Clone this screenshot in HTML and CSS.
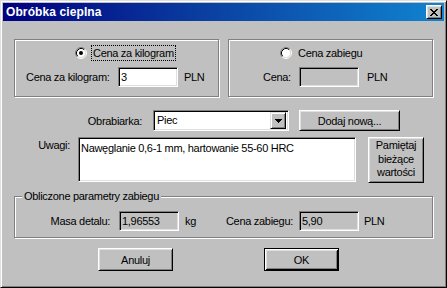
FILE: index.html
```html
<!DOCTYPE html>
<html lang="pl">
<head>
<meta charset="utf-8">
<title>Obróbka cieplna</title>
<link rel="stylesheet" href="styles.css">
</head>
<body>
<div class="window">
  <div class="titlebar">
    <span class="title">Obróbka cieplna</span>
    <span class="close-btn">
      <svg width="8" height="7" viewBox="0 0 8 7" shape-rendering="crispEdges"><path d="M0 0h2v1H0zM6 0h2v1H6zM1 1h2v1H1zM5 1h2v1H5zM2 2h4v1H2zM3 3h2v1H3zM2 4h4v1H2zM1 5h2v1H1zM5 5h2v1H5zM0 6h2v1H0zM6 6h2v1H6z" fill="#000"/></svg>
    </span>
  </div>
  <div class="client">
    <div class="groups">
      <div class="group g-top g1">
        <div class="radio-row rr1">
          <svg class="radio" width="12" height="12" viewBox="0 0 12 12"><circle cx="6" cy="6" r="4.5" fill="#fff"/><path d="M2.11 9.89A5.5 5.5 0 0 1 9.89 2.11" fill="none" stroke="#808080"/><path d="M9.89 2.11A5.5 5.5 0 0 1 2.11 9.89" fill="none" stroke="#fff"/><path d="M2.82 9.18A4.5 4.5 0 0 1 9.18 2.82" fill="none" stroke="#000"/><path d="M9.18 2.82A4.5 4.5 0 0 1 2.82 9.18" fill="none" stroke="#dfdfdf"/><circle cx="6" cy="6" r="2" fill="#000"/></svg>
          <span class="radio-label focused">Cena za kilogram</span>
        </div>
        <div class="field-row fr1">
          <span class="lbl lbl-kg">Cena za kilogram:</span>
          <span class="edit edit-w">3</span>
          <span class="unit u1">PLN</span>
        </div>
      </div>
      <div class="group g-top g2">
        <div class="radio-row rr2">
          <svg class="radio" width="12" height="12" viewBox="0 0 12 12"><circle cx="6" cy="6" r="4.5" fill="#fff"/><path d="M2.11 9.89A5.5 5.5 0 0 1 9.89 2.11" fill="none" stroke="#808080"/><path d="M9.89 2.11A5.5 5.5 0 0 1 2.11 9.89" fill="none" stroke="#fff"/><path d="M2.82 9.18A4.5 4.5 0 0 1 9.18 2.82" fill="none" stroke="#000"/><path d="M9.18 2.82A4.5 4.5 0 0 1 2.82 9.18" fill="none" stroke="#dfdfdf"/></svg>
          <span class="radio-label">Cena zabiegu</span>
        </div>
        <div class="field-row fr2">
          <span class="lbl lbl-cena">Cena:</span>
          <span class="edit edit-g"></span>
          <span class="unit u2">PLN</span>
        </div>
      </div>
    </div>

    <div class="machine-row">
      <span class="lbl lbl-machine">Obrabiarka:</span>
      <div class="combo">
        <span class="combo-text">Piec</span>
        <span class="combo-btn">
          <svg width="7" height="4" viewBox="0 0 7 4" shape-rendering="crispEdges"><path d="M0 0h7v1H0zM1 1h5v1H1zM2 2h3v1H2zM3 3h1v1H3z" fill="#000"/></svg>
        </span>
      </div>
      <span class="btn btn-add">Dodaj nową...</span>
    </div>

    <div class="notes-row">
      <span class="lbl lbl-notes">Uwagi:</span>
      <div class="memo">Nawęglanie 0,6-1 mm, hartowanie 55-60 HRC</div>
      <span class="btn btn-remember">Pamiętaj<br>bieżące<br>wartości</span>
    </div>

    <div class="group g3">
      <span class="legend">Obliczone parametry zabiegu</span>
      <div class="calc-row">
        <span class="lbl lbl-mass">Masa detalu:</span>
        <span class="edit edit-g edit-ro">1,96553</span>
        <span class="unit u-kgunit">kg</span>
        <span class="lbl lbl-price">Cena zabiegu:</span>
        <span class="edit edit-g edit-ro">5,90</span>
        <span class="unit u3">PLN</span>
      </div>
    </div>

    <div class="buttons">
      <span class="btn btn-cancel">Anuluj</span>
      <span class="btn btn-default btn-ok">OK</span>
    </div>
  </div>
</div>
</body>
</html>
```

FILE: styles.css
```css
* { box-sizing: border-box; }
html, body { margin: 0; padding: 0; }
body {
  width: 447px;
  height: 288px;
  overflow: hidden;
  background: #c0c0c0;
  font-family: "Liberation Sans", Arial, sans-serif;
  font-size: 11px;
  letter-spacing: -0.3px;
  color: #000;
}

.window {
  width: 447px;
  height: 288px;
  border: 1px solid;
  border-color: #dfdfdf #000 #000 #dfdfdf;
  box-shadow: inset 1px 1px #fff, inset -1px -1px #808080;
  padding: 2px;
  background: #c0c0c0;
  display: flex;
  flex-direction: column;
}

.titlebar {
  height: 18px;
  flex: none;
  background: linear-gradient(90deg, #000080 0%, #0a3ea0 45%, #1084d0 100%);
  display: flex;
  align-items: center;
  justify-content: space-between;
  padding: 0 2px 0 3px;
}
.title {
  color: #fff;
  font-weight: bold;
  font-size: 12px;
  letter-spacing: 0.1px;
  line-height: 14px;
}
.close-btn {
  width: 16px;
  height: 14px;
  background: #c0c0c0;
  border: 1px solid;
  border-color: #fff #000 #000 #fff;
  box-shadow: inset 1px 1px #dfdfdf, inset -1px -1px #808080;
  display: flex;
  align-items: center;
  justify-content: center;
}
.close-btn svg { display: block; }

.client {
  flex: 1;
  display: flex;
  flex-direction: column;
  padding: 18px 0 0 11px;
}

/* group boxes */
.groups { display: flex; gap: 9px; }
.group {
  border: 1px solid #808080;
  box-shadow: inset 1px 1px #fff, 1px 1px #fff;
}
.g-top {
  width: 205px;
  height: 58px;
  display: flex;
  flex-direction: column;
}

.radio-row {
  display: flex;
  align-items: center;
  height: 16px;
  margin-top: 5px;
}
.rr1 { padding-left: 60px; }
.rr2 { padding-left: 51px; }
.radio { display: block; flex: none; margin-right: 4px; }
.radio-label {
  border: 1px solid transparent;
  padding: 0 1px;
  line-height: 14px;
}
.radio-label.focused { border: 1px dotted #000; }

.field-row {
  display: flex;
  align-items: center;
  height: 20px;
  margin-top: 6px;
}
.fr1 { padding-left: 11px; }
.fr2 { padding-left: 34px; }

.lbl { white-space: nowrap; }
.lbl-kg { width: 92px; }
.lbl-cena { width: 36px; }

.edit {
  height: 20px;
  width: 60px;
  border: 1px solid;
  border-color: #808080 #fff #fff #808080;
  box-shadow: inset 1px 1px #000, inset -1px -1px #dfdfdf;
  padding: 0 0 0 2px;
  line-height: 17px;
  display: flex;
  align-items: center;
  flex: none;
}
.edit-w { background: #fff; }
.edit-g { background: #c0c0c0; }
.edit-ro { padding-left: 2px; }

.unit { white-space: nowrap; }
.u1 { margin-left: 6px; }
.u2 { margin-left: 8px; }

/* machine row */
.machine-row {
  display: flex;
  align-items: center;
  margin-top: 13px;
  height: 21px;
}
.lbl-machine {
  width: 139px;
  text-align: right;
  padding-right: 11px;
}
.combo {
  width: 136px;
  height: 21px;
  background: #fff;
  border: 1px solid;
  border-color: #808080 #fff #fff #808080;
  box-shadow: inset 1px 1px #000, inset -1px -1px #dfdfdf;
  display: flex;
  align-items: center;
  justify-content: space-between;
  padding: 2px 2px 2px 3px;
}
.combo-text { line-height: 15px; }
.combo-btn {
  width: 16px;
  height: 17px;
  background: #c0c0c0;
  border: 1px solid;
  border-color: #dfdfdf #000 #000 #dfdfdf;
  box-shadow: inset 1px 1px #fff, inset -1px -1px #808080;
  display: flex;
  align-items: center;
  justify-content: center;
}
.combo-btn svg { display: block; }

.btn {
  background: #c0c0c0;
  border: 1px solid;
  border-color: #fff #000 #000 #fff;
  box-shadow: inset 1px 1px #dfdfdf, inset -1px -1px #808080;
  display: flex;
  align-items: center;
  justify-content: center;
  text-align: center;
  flex: none;
}
.btn-default {
  border: 1px solid #000;
  box-shadow: inset 1px 1px #fff, inset -1px -1px #000, inset 2px 2px #dfdfdf, inset -2px -2px #808080;
}
.btn-add {
  width: 101px;
  height: 21px;
  margin-left: 10px;
}

/* notes row */
.notes-row {
  display: flex;
  align-items: flex-start;
  margin-top: 6px;
}
.lbl-notes {
  width: 64px;
  text-align: right;
  padding-right: 8px;
  padding-top: 1px;
  line-height: 14px;
}
.memo {
  width: 278px;
  height: 45px;
  background: #fff;
  border: 1px solid;
  border-color: #808080 #fff #fff #808080;
  box-shadow: inset 1px 1px #000, inset -1px -1px #dfdfdf;
  padding: 3px 2px 0 2px;
  line-height: 14px;
  white-space: nowrap;
  overflow: hidden;
}
.btn-remember {
  width: 56px;
  height: 46px;
  margin-left: 12px;
  line-height: 13.5px;
  padding-bottom: 1px;
}

/* computed group */
.g3 {
  width: 419px;
  height: 42px;
  margin-top: 13px;
  display: flex;
  flex-direction: column;
}
.legend {
  align-self: flex-start;
  background: #c0c0c0;
  margin: -7px 0 0 7px;
  padding: 0 2px;
  line-height: 13px;
}
.calc-row {
  display: flex;
  align-items: center;
  height: 20px;
  margin-top: 8px;
}
.lbl-mass {
  width: 104px;
  text-align: right;
  padding-right: 9px;
}
.u-kgunit { width: 20px; margin-left: 6px; }
.lbl-price {
  width: 94px;
  text-align: right;
  padding-right: 6px;
}
.u3 { margin-left: 5px; }

/* bottom buttons */
.buttons {
  display: flex;
  margin-top: 10px;
}
.btn-cancel {
  width: 75px;
  height: 23px;
  margin-left: 84px;
}
.btn-ok {
  width: 75px;
  height: 23px;
  margin-left: 91px;
}
```
